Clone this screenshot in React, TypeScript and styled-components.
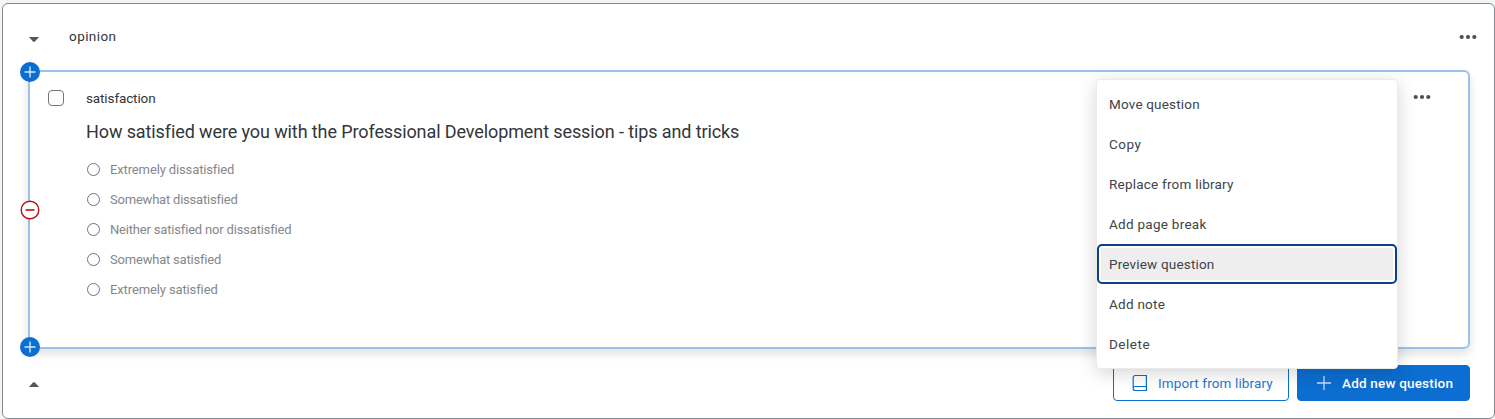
import React from "react";
import styled, { createGlobalStyle } from "styled-components";

const GlobalStyle = createGlobalStyle`
  * { box-sizing: border-box; }
  body {
    margin: 0;
    background: #f4f4f4;
    color: #32363a;
    font-family: Roboto, "Liberation Sans", sans-serif;
    font-size: 13.5px;
  }
  button { font: inherit; color: inherit; background: none; border: 0; padding: 0; }
`;

const Block = styled.section`
  height: 416px;
  margin: 3px 0 0 2px;
  padding: 0 24px 0 25px;
  background: #fff;
  border: 1px solid #83898f;
  border-radius: 6px;
`;

const BlockHeader = styled.header`
  display: flex;
  align-items: center;
  height: 66px;
  margin-right: -7px;
`;

const Caret = styled.svg<{ $drop?: number }>`
  display: block;
  width: 10px;
  height: 5px;
  margin: ${(p) => p.$drop ?? 0}px 0 0 1px;
  fill: #54565b;
`;

const BlockName = styled.h2`
  flex: 1;
  margin: 0 0 2px 30px;
  font-size: 13.5px;
  font-weight: 400;
  line-height: 20px;
  letter-spacing: 0.43px;
`;

const DotsButton = styled.button`
  display: flex;
  width: 18px;
  height: 20px;
  align-items: center;
  svg { display: block; fill: #4c4f54; }
`;

const QuestionCard = styled.article`
  position: relative;
  display: flex;
  height: 279px;
  padding: 0 37px 0 18px;
  border: 2px solid #9bc2ed;
  border-radius: 6px;
  box-shadow: 0 5px 10px rgba(0, 0, 0, 0.12);
`;

const Checkbox = styled.span`
  width: 16px;
  height: 16px;
  margin-top: 18px;
  border: 1px solid #75787b;
  border-radius: 4px;
`;

const QuestionBody = styled.div`
  flex: 1;
  padding: 16px 0 0 22px;
`;

const QuestionTag = styled.div`
  line-height: 20px;
  letter-spacing: -0.12px;
`;

const QuestionTitle = styled.h3`
  margin: 10px 0 0;
  font-size: 18px;
  font-weight: 400;
  line-height: 28px;
  letter-spacing: -0.105px;
`;

const Choices = styled.ul`
  margin: 8px 0 0;
  padding: 0;
  list-style: none;
`;

const Choice = styled.li<{ $spacing: number }>`
  display: flex;
  align-items: center;
  gap: 10px;
  height: 30px;
  color: #85888a;
  font-size: 13px;
  letter-spacing: ${(p) => p.$spacing}px;
`;

const Radio = styled.span`
  width: 13px;
  height: 13px;
  margin-left: 1px;
  border: 1px solid #6f7275;
  border-radius: 50%;
`;

const CardDots = styled.div`
  padding-top: 15px;
`;

const EdgeBadge = styled.svg<{ $top: number }>`
  position: absolute;
  left: -10px;
  top: ${(p) => p.$top}px;
  width: 20px;
  height: 20px;
`;

const Menu = styled.div`
  position: absolute;
  z-index: 2;
  top: 7px;
  right: 70px;
  width: 302px;
  height: 290px;
  padding: 4px 0;
  background: #fff;
  border: 1px solid #ebebeb;
  border-radius: 4px;
  box-shadow: 0 4px 18px rgba(0, 0, 0, 0.17);
`;

const MenuItem = styled.button<{ $spacing: number; $focused?: boolean }>`
  display: flex;
  align-items: center;
  width: 300px;
  height: 40px;
  padding: 0 2px 0 ${(p) => (p.$focused ? 10 : 12)}px;
  color: #404448;
  letter-spacing: ${(p) => p.$spacing}px;
  border: ${(p) => (p.$focused ? "2px solid #0b3f86" : "0")};
  border-radius: 5px;
  background: ${(p) => (p.$focused ? "#eee" : "transparent")};
  box-shadow: ${(p) => (p.$focused ? "inset 0 0 0 2px #fff" : "none")};
`;

const BlockFooter = styled.footer`
  display: flex;
  align-items: center;
  gap: 8px;
  padding-top: 16px;
`;

const FooterSpace = styled.div`
  flex: 1;
  padding-top: 2px;
`;

const ActionButton = styled.button<{ $primary?: boolean }>`
  display: flex;
  align-items: center;
  flex: none;
  width: ${(p) => (p.$primary ? 173 : 176)}px;
  height: 36px;
  padding-left: ${(p) => (p.$primary ? 19 : 18)}px;
  gap: ${(p) => (p.$primary ? 11 : 10)}px;
  color: ${(p) => (p.$primary ? "#fff" : "#2a76cf")};
  background: ${(p) => (p.$primary ? "#0b6ed0" : "#fff")};
  border: 1px solid #0b6ed0;
  border-radius: 4px;
  font-weight: ${(p) => (p.$primary ? 500 : 400)};
  letter-spacing: ${(p) => (p.$primary ? 0.19 : 0.13)}px;
  white-space: nowrap;
`;

const Dots = () => (
  <DotsButton aria-label="More options">
    <svg width="18" height="6" viewBox="0 0 18 6">
      <circle cx="2.7" cy="3" r="2.1" />
      <circle cx="9" cy="3" r="2.1" />
      <circle cx="15.3" cy="3" r="2.1" />
    </svg>
  </DotsButton>
);

const AddBadge = ({ top }: { top: number }) => (
  <EdgeBadge $top={top} viewBox="0 0 20 20">
    <circle cx="10" cy="10" r="10" fill="#0b6ed0" />
    <path d="M10 4.5v11M4.5 10h11" stroke="#d5e7f9" strokeWidth="1.4" />
  </EdgeBadge>
);

const choices = [
  { label: "Extremely dissatisfied", spacing: -0.13 },
  { label: "Somewhat dissatisfied", spacing: -0.21 },
  { label: "Neither satisfied nor dissatisfied", spacing: -0.18 },
  { label: "Somewhat satisfied", spacing: -0.2 },
  { label: "Extremely satisfied", spacing: -0.12 },
];

const actions = [
  { label: "Move question", spacing: 0.18 },
  { label: "Copy", spacing: 0.5 },
  { label: "Replace from library", spacing: 0.22 },
  { label: "Add page break", spacing: 0.27 },
  { label: "Preview question", spacing: 0.18, focused: true },
  { label: "Add note", spacing: 0.25 },
  { label: "Delete", spacing: 0.5 },
];

export default function App() {
  return (
    <>
      <GlobalStyle />
      <Block>
        <BlockHeader>
          <Caret viewBox="0 0 10 5" $drop={4}>
            <path d="M0 0h10L6 4.5Q5 5 4 4.5Z" />
          </Caret>
          <BlockName>opinion</BlockName>
          <Dots />
        </BlockHeader>
        <QuestionCard>
          <AddBadge top={-10} />
          <EdgeBadge $top={128} viewBox="0 0 20 20">
            <circle cx="10" cy="10" r="8.8" fill="#fff" stroke="#b90d0d" strokeWidth="1.4" />
            <path d="M5.5 10h9" stroke="#b90d0d" strokeWidth="1.6" />
          </EdgeBadge>
          <AddBadge top={265} />
          <Checkbox />
          <QuestionBody>
            <QuestionTag>satisfaction</QuestionTag>
            <QuestionTitle>
              How satisfied were you with the Professional Development session - tips and tricks
            </QuestionTitle>
            <Choices>
              {choices.map((c) => (
                <Choice key={c.label} $spacing={c.spacing}>
                  <Radio />
                  <span>{c.label}</span>
                </Choice>
              ))}
            </Choices>
          </QuestionBody>
          <CardDots>
            <Dots />
          </CardDots>
          <Menu>
            {actions.map((a) => (
              <MenuItem key={a.label} $spacing={a.spacing} $focused={a.focused}>
                {a.label}
              </MenuItem>
            ))}
          </Menu>
        </QuestionCard>
        <BlockFooter>
          <FooterSpace>
            <Caret viewBox="0 0 10 5">
              <path d="M0 5h10L6 .5Q5 0 4 .5Z" />
            </Caret>
          </FooterSpace>
          <ActionButton>
            <svg width="16" height="18" viewBox="0 0 16 18" fill="none" stroke="#0b6ed0" strokeWidth="1.2">
              <path d="M14.4 12.5V1.5H3.2Q1.2 1.5 1.2 3.7V14.5Q1.2 16.5 3.2 16.5H15M1.2 14.5Q1.2 12.5 3.2 12.5H15M14.4 12.5V16.5" />
            </svg>
            Import from library
          </ActionButton>
          <ActionButton $primary>
            <svg width="14" height="14" viewBox="0 0 14 14" stroke="#c6def5" strokeWidth="1.3">
              <path d="M7 0v14M0 7h14" />
            </svg>
            Add new question
          </ActionButton>
        </BlockFooter>
      </Block>
    </>
  );
}
